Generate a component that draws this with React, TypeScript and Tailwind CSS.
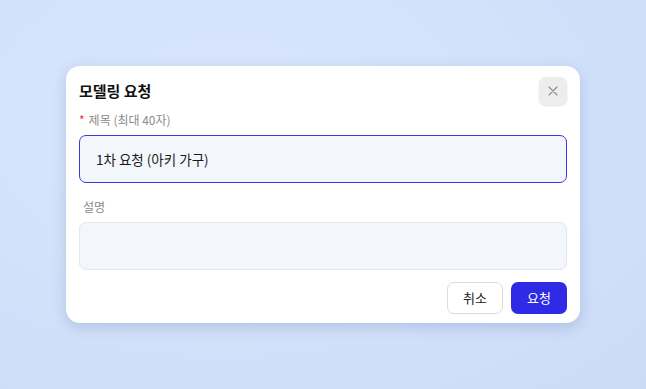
import React, { useState } from 'react';

const App: React.FC = () => {
  const [title, setTitle] = useState('1차 요청 (아키 가구)');
  const [desc, setDesc] = useState('');

  return (
    <div className="w-[646px] h-[389px] flex items-center justify-center bg-[radial-gradient(ellipse_at_35%_30%,#d9e6fc_0%,#d2e1fa_55%,#cbdaf7_100%)] font-['Noto_Sans_CJK_KR','Noto_Sans',sans-serif]">
      <div className="w-[514px] bg-white rounded-[14px] shadow-[0_4px_14px_rgba(60,90,150,0.22)] px-[13px] pt-[11px] pb-[9px] flex flex-col">
        <div className="flex items-center justify-between h-[28px]">
          <h2 className="text-[15px] font-bold text-[#111] leading-6">모델링 요청</h2>
          <button className="w-[28px] h-[28px] rounded-[7px] bg-[#ededee] shadow-[0_1px_2px_rgba(0,0,0,0.12)] flex items-center justify-center">
            <svg width="10" height="10" viewBox="0 0 10 10" fill="none" stroke="#8c8c8c" strokeWidth="1.1" strokeLinecap="round">
              <path d="M1 1l8 8M9 1l-8 8" />
            </svg>
          </button>
        </div>

        <label className="mt-[7px] text-[12px] leading-4 text-[#8c8c8c]">
          <span className="text-[#e0383e] mr-[4px]">*</span>제목 (최대 40자)
        </label>
        <input
          value={title}
          onChange={(e) => setTitle(e.target.value)}
          className="mt-[7px] h-[48px] w-full rounded-[7px] border border-[#3a36e0] bg-[#f3f6fa] pl-[16px] text-[13.5px] text-[#1a1a1a] outline-none"
        />

        <label className="mt-[16px] pl-[4px] text-[12px] leading-4 text-[#8c8c8c]">설명</label>
        <textarea
          value={desc}
          onChange={(e) => setDesc(e.target.value)}
          className="mt-[7px] h-[48px] w-full resize-none rounded-[7px] border border-[#e4e7ec] bg-[#f3f6fa] px-[16px] py-[12px] text-[13.5px] outline-none"
        />

        <div className="mt-[12px] flex justify-end gap-[8px]">
          <button className="w-[56px] h-[32px] rounded-[7px] border border-[#dcdcdc] bg-white text-[13px] text-[#222]">취소</button>
          <button className="w-[56px] h-[32px] rounded-[7px] bg-[#2f2ae6] text-[13px] text-white">요청</button>
        </div>
      </div>
    </div>
  );
};

export default App;
